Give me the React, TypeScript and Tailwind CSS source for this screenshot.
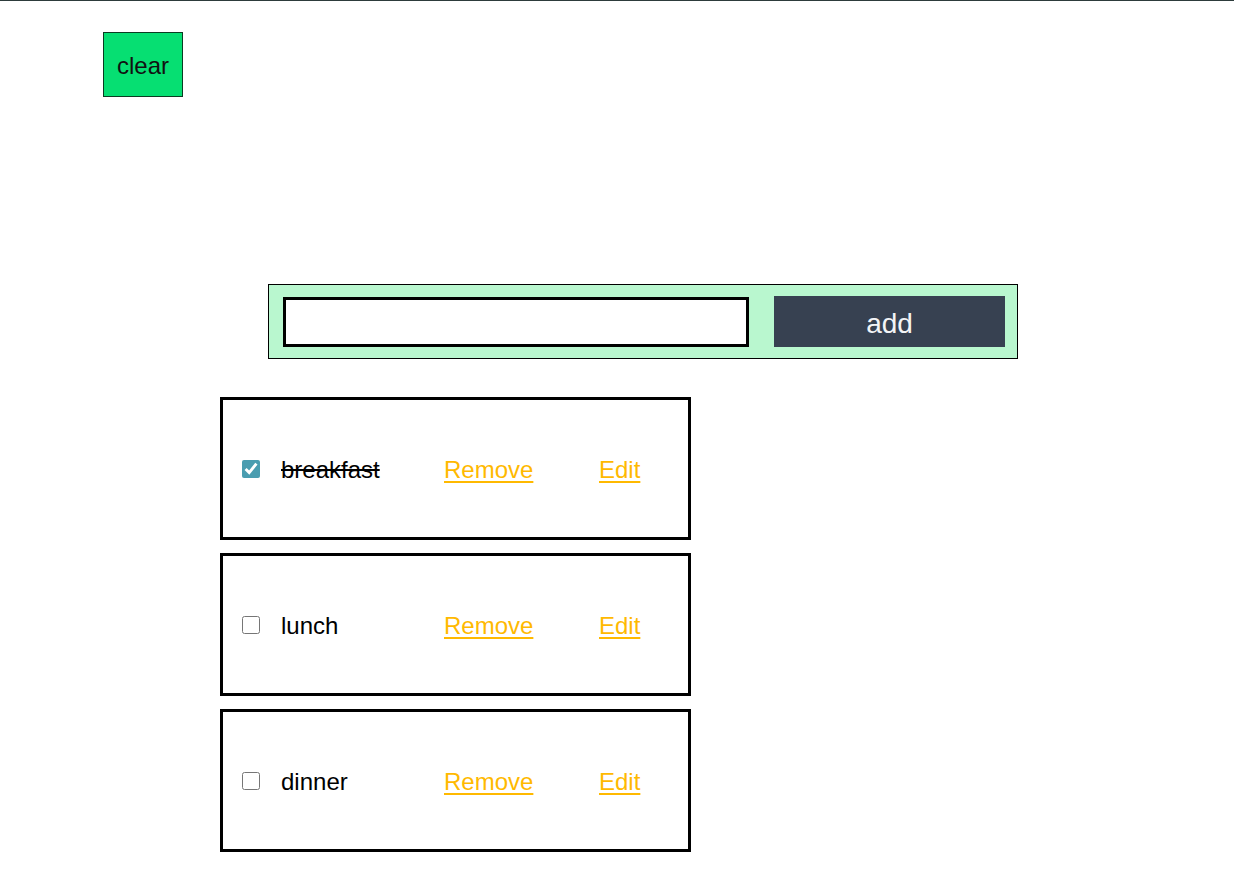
import React from "react";

const items = [
  { name: "breakfast", done: true },
  { name: "lunch", done: false },
  { name: "dinner", done: false },
];

export default function App() {
  return (
    <div
      className="min-h-[883px] w-full bg-white border-t border-[#2d3b3b] text-black"
      style={{ fontFamily: '"Liberation Sans", Arial, sans-serif' }}
    >
      <div className="pl-[103px] pt-[31px]">
        <button className="w-[80px] h-[65px] bg-[#06df72] border border-[#0b3b22] text-[24px] leading-none text-[#111] pt-[3px]">
          clear
        </button>
      </div>

      <div className="ml-[268px] mt-[187px] w-[750px] h-[75px] border border-black bg-[#b9f7cf] flex items-center pl-[14px]">
        <input
          type="text"
          className="w-[466px] h-[50px] border-[3px] border-black bg-white outline-none"
        />
        <button className="ml-[25px] w-[231px] h-[51px] bg-[#374151] text-[#f3f4f6] text-[28px] font-light leading-none pt-[4px]">
          add
        </button>
      </div>

      <div className="ml-[220px] mt-[38px] flex flex-col gap-[13px]">
        {items.map((it) => (
          <div
            key={it.name}
            className="w-[471px] h-[143px] border-[3px] border-black flex items-center pl-[19px] pt-[3px]"
          >
            <input
              type="checkbox"
              defaultChecked={it.done}
              className="w-[18px] h-[18px] m-0 accent-[#4a9db0] -mt-[2px]"
            />
            <span
              className={
                "ml-[21px] w-[163px] text-[24px] " +
                (it.done ? "line-through" : "")
              }
            >
              {it.name}
            </span>
            <a
              href="#"
              className="w-[155px] text-[24px] text-[#ffb900] underline underline-offset-[3px]"
            >
              Remove
            </a>
            <a
              href="#"
              className="text-[24px] text-[#ffb900] underline underline-offset-[3px]"
            >
              Edit
            </a>
          </div>
        ))}
      </div>
    </div>
  );
}
